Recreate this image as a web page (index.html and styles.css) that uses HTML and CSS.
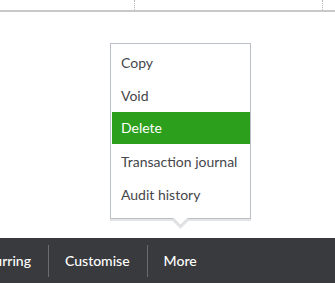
FILE: index.html
```html
<!DOCTYPE html>
<html>
<head>
<meta charset="utf-8">
<link rel="stylesheet" href="styles.css">
</head>
<body>
<div class="page">
  <div class="grid-top">
    <div class="cell c1"></div>
    <div class="cell c2"></div>
    <div class="cell c3"></div>
  </div>
  <div class="stage">
    <div class="menu">
      <div class="item">Copy</div>
      <div class="item">Void</div>
      <div class="item active">Delete</div>
      <div class="item">Transaction journal</div>
      <div class="item">Audit history</div>
    </div>
  </div>
  <div class="bar">
    <div class="bar-item clip"><span>Make recurring</span></div>
    <div class="sep"></div>
    <div class="bar-item">Customise</div>
    <div class="sep"></div>
    <div class="bar-item">More</div>
  </div>
</div>
</body>
</html>
```
FILE: styles.css
```css
html, body {
  margin: 0;
  padding: 0;
  background: #fff;
}
.page {
  width: 335px;
  height: 283px;
  overflow: hidden;
  display: flex;
  flex-direction: column;
  font-family: "Lato", "Open Sans", sans-serif;
}
.grid-top {
  display: flex;
  height: 10px;
  border-bottom: 2px solid #c8c8c8;
}
.cell {
  height: 10px;
}
.c1 { width: 134px; }
.c2 { width: 187px; border-left: 1px dotted #b8b8b8; }
.c3 { flex: 1; border-left: 1px dotted #b8b8b8; }
.stage {
  flex: 1;
  position: relative;
}
.menu {
  position: absolute;
  left: 110px;
  top: 31px;
  width: 141px;
  box-sizing: border-box;
  padding: 2px 0 7px 0;
  background: #fff;
  border: 1px solid #babec5;
  box-shadow: 0 2px 0 #e3e4e6;
}
.menu::after {
  content: "";
  position: absolute;
  left: 64px;
  bottom: -6px;
  width: 10px;
  height: 10px;
  background: #fff;
  border-right: 1px solid #d5d6d8;
  border-bottom: 1px solid #d5d6d8;
  box-shadow: 2px 2px 0 #e3e4e6;
  transform: rotate(45deg);
}
.item {
  height: 33px;
  line-height: 33px;
  padding-left: 10px;
  font-size: 14px;
  color: #45464a;
}
.item.active {
  background: #2ca01c;
  color: #fff;
  height: 32px;
  line-height: 32px;
  margin-bottom: 1px;
  margin-left: 1px;
  padding-left: 9px;
}
.bar {
  height: 45px;
  background: #393a3d;
  display: flex;
  align-items: center;
  color: #fff;
  font-size: 14px;
  font-weight: 500;
}
.bar-item {
  padding: 0 17px 0 16px;
  white-space: nowrap;
}
.bar-item.clip {
  width: 48px;
  box-sizing: border-box;
  overflow: hidden;
  display: flex;
  justify-content: flex-end;
  padding: 0 17px 0 0;
}
.bar-item.clip span {
  flex: none;
}
.sep {
  width: 1px;
  height: 32px;
  background: #6b6c72;
}
```
